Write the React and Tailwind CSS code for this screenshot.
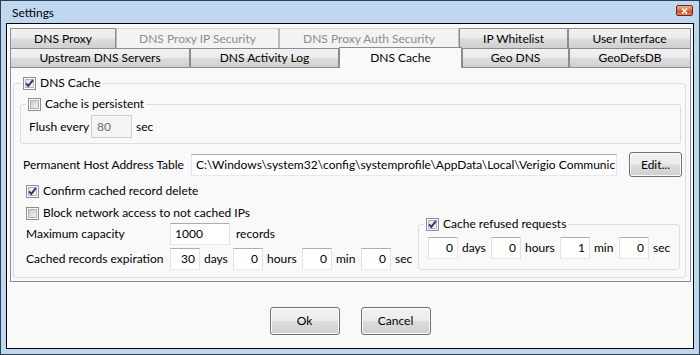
import React from "react";

// Win7 style "Settings" dialog, DNS Cache page

const FONT = "font-['Lato',sans-serif]";

const CheckBox = ({ checked }) => (
  <svg width="13" height="13" viewBox="0 0 13 13" className="shrink-0">
    <defs>
      <linearGradient id="cbOff" x1="0" y1="0" x2="1" y2="1">
        <stop offset="0" stopColor="#c6cad0" />
        <stop offset="1" stopColor="#f4f4f4" />
      </linearGradient>
      <linearGradient id="cbOn" x1="0" y1="0" x2="1" y2="1">
        <stop offset="0" stopColor="#dfe1e4" />
        <stop offset="1" stopColor="#fbfbfb" />
      </linearGradient>
    </defs>
    <rect x="0.5" y="0.5" width="12" height="12" fill="#fbfbfb" stroke="#8e8f8f" />
    <rect
      x="2.5"
      y="2.5"
      width="8"
      height="8"
      fill={checked ? "url(#cbOn)" : "url(#cbOff)"}
      stroke="#b0b4ba"
    />
    {checked && (
      <path
        d="M3.1 6.4 L5.3 8.9 L9.9 3.1"
        fill="none"
        stroke="#25377a"
        strokeWidth="1.9"
      />
    )}
  </svg>
);

const TextBox = ({ value, w, align = "right" }) => (
  <div
    className={`h-[22px] ${w} shrink-0 flex items-center border whitespace-nowrap overflow-hidden bg-white border-[#e2e3ea] border-t-[#abadb3] border-b-[#e3e9ef] ${
      align === "right" ? "justify-end pr-[4px]" : "pl-[4px]"
    }`}
  >
    {value}
  </div>
);

const Button = ({ label, w, h }) => (
  <div
    className={`${w} ${h} flex items-center justify-center rounded-[3px] border border-[#707070] bg-[linear-gradient(#f2f2f2_0%,#ebebeb_48%,#dddddd_52%,#cfcfcf_100%)] shadow-[inset_0_0_0_1px_#fcfcfc]`}
  >
    {label}
  </div>
);

const Tab = ({ label, w, state }) => {
  if (state === "selected") {
    return (
      <div
        className={`${w} h-[21px] -mt-px relative z-10 flex items-center justify-center border-t border-x border-[#898c95] bg-[#f9f9f9]`}
      >
        {label}
      </div>
    );
  }
  if (state === "disabled") {
    return (
      <div
        className={`${w} h-full flex items-center justify-center border-t border-x border-[#b9bbc0] border-t-[#d6d6d6] bg-[#f3f3f3] text-[#8d8d8d]`}
      >
        {label}
      </div>
    );
  }
  return (
    <div
      className={`${w} h-full flex items-center justify-center border-t border-x border-[#898c95] bg-[linear-gradient(#f2f2f2_0%,#ebebeb_48%,#dddddd_52%,#cfcfcf_100%)]`}
    >
      {label}
    </div>
  );
};

const UnitRow = ({ items }) => (
  <div className="flex items-center gap-[4px]">
    {items.map(([value, unit, uw]) => (
      <React.Fragment key={unit}>
        <TextBox value={value} w="w-[30px]" />
        <span className={`${uw} whitespace-nowrap`}>{unit}</span>
      </React.Fragment>
    ))}
  </div>
);

export default function App() {
  return (
    <div
      className={`${FONT} w-[700px] h-[355px] border border-[#2f3f52] bg-[#bfd8f0] text-[12px] leading-[16px] text-black flex flex-col whitespace-nowrap`}
    >
      {/* Title bar */}
      <div className="h-[22px] flex items-start justify-between">
        <span className="pl-[11px] pt-[4px]">Settings</span>
        <div className="mt-[4px] mr-[6px] w-[17px] h-[11px] rounded-[2px] border border-[#6b2b17] bg-[linear-gradient(#eab09a_0%,#d9683d_50%,#c9471c_55%,#de8a5e_100%)] flex items-center justify-center">
          <svg width="7" height="6" viewBox="0 0 7 6">
            <path d="M1 0.5 L6 5.5 M6 0.5 L1 5.5" stroke="#ffffff" strokeWidth="1.6" />
          </svg>
        </div>
      </div>

      {/* Client area */}
      <div className="mx-[5px] h-[326px] border border-black bg-[#f9f9f9] flex flex-col">
        {/* Tabs */}
        <div className="pt-[4px] pl-[3px]">
          <div className="h-[20px] flex">
            <Tab label="DNS Proxy" w="w-[106px]" />
            <Tab label="DNS Proxy IP Security" w="w-[163px]" state="disabled" />
            <Tab label="DNS Proxy Auth Security" w="w-[180px]" state="disabled" />
            <Tab label="IP Whitelist" w="w-[109px]" />
            <Tab label="User Interface" w="w-[123px]" />
          </div>
          <div className="h-[19px] flex">
            <Tab label="Upstream DNS Servers" w="w-[180px]" />
            <Tab label="DNS Activity Log" w="w-[149px]" />
            <Tab label="DNS Cache" w="w-[123px]" state="selected" />
            <Tab label="Geo DNS" w="w-[107px]" />
            <Tab label="GeoDefsDB" w="w-[122px]" />
          </div>
        </div>

        {/* Tab page */}
        <div className="ml-[3px] w-[681px] border border-[#898c95] bg-[#f9f9f9] pt-[7px] pb-[3px] pl-[2px]">
          <fieldset className="w-[673px] border border-[#d5dfe5] rounded-[3px]">
            <legend className="ml-[7px] px-[2px]">
              <span className="h-[16px] flex items-center gap-[4px]">
                <CheckBox checked />
                <span>DNS Cache</span>
              </span>
            </legend>

            {/* Cache is persistent */}
            <fieldset className="mt-[5px] ml-[6px] w-[661px] border border-[#d5dfe5] rounded-[3px]">
              <legend className="ml-[5px] px-[2px]">
                <span className="h-[16px] flex items-center gap-[4px]">
                  <CheckBox />
                  <span>Cache is persistent</span>
                </span>
              </legend>
              <div className="mt-[3px] mb-[5px] pl-[8px] flex items-center h-[23px]">
                <span className="w-[62px]">Flush every</span>
                <div className="h-[23px] w-[41px] flex items-center bg-[#f4f4f4] border border-[#cfcfcf] text-[#6d6d6d] pl-[5px]">
                  80
                </div>
                <span className="ml-[4px]">sec</span>
              </div>
            </fieldset>

            {/* Permanent Host Address Table */}
            <div className="mt-[8px] pl-[9px] h-[25px] flex items-center">
              <span className="w-[168px]">Permanent Host Address Table</span>
              <TextBox
                value={"C:\\Windows\\system32\\config\\systemprofile\\AppData\\Local\\Verigio Communic"}
                w="w-[426px]"
                align="left"
              />
              <div className="ml-[12px]">
                <Button label="Edit..." w="w-[53px]" h="h-[25px]" />
              </div>
            </div>

            <div className="mt-[6px] pl-[12px] h-[16px] flex items-center gap-[4px]">
              <CheckBox checked />
              <span>Confirm cached record delete</span>
            </div>

            <div className="mt-[6px] mb-[7px] flex items-end">
              <div className="w-[404px] pl-[12px] flex flex-col">
                <div className="h-[16px] flex items-center gap-[4px]">
                  <CheckBox />
                  <span>Block network access to not cached IPs</span>
                </div>
                <div className="mt-[2px] flex items-center">
                  <span className="w-[144px]">Maximum capacity</span>
                  <TextBox value="1000" w="w-[60px]" align="left" />
                  <span className="ml-[6px]">records</span>
                </div>
                <div className="mt-[3px] flex items-center">
                  <span className="w-[144px]">Cached records expiration</span>
                  <UnitRow
                    items={[
                      ["30", "days", "w-[25px]"],
                      ["0", "hours", "w-[31px]"],
                      ["0", "min", "w-[21px]"],
                      ["0", "sec", "w-[20px]"],
                    ]}
                  />
                </div>
              </div>

              <fieldset className="w-[262px] border border-[#d5dfe5] rounded-[3px]">
                <legend className="ml-[5px] px-[2px]">
                  <span className="h-[16px] flex items-center gap-[4px]">
                    <CheckBox checked />
                    <span>Cache refused requests</span>
                  </span>
                </legend>
                <div className="mt-[5px] mb-[10px] pl-[9px]">
                  <UnitRow
                    items={[
                      ["0", "days", "w-[25px]"],
                      ["0", "hours", "w-[31px]"],
                      ["1", "min", "w-[21px]"],
                      ["0", "sec", "w-[20px]"],
                    ]}
                  />
                </div>
              </fieldset>
            </div>
          </fieldset>
        </div>

        {/* Dialog buttons */}
        <div className="mt-[25px] flex justify-center gap-[21px]">
          <Button label="Ok" w="w-[70px]" h="h-[28px]" />
          <Button label="Cancel" w="w-[70px]" h="h-[28px]" />
        </div>
      </div>
    </div>
  );
}
